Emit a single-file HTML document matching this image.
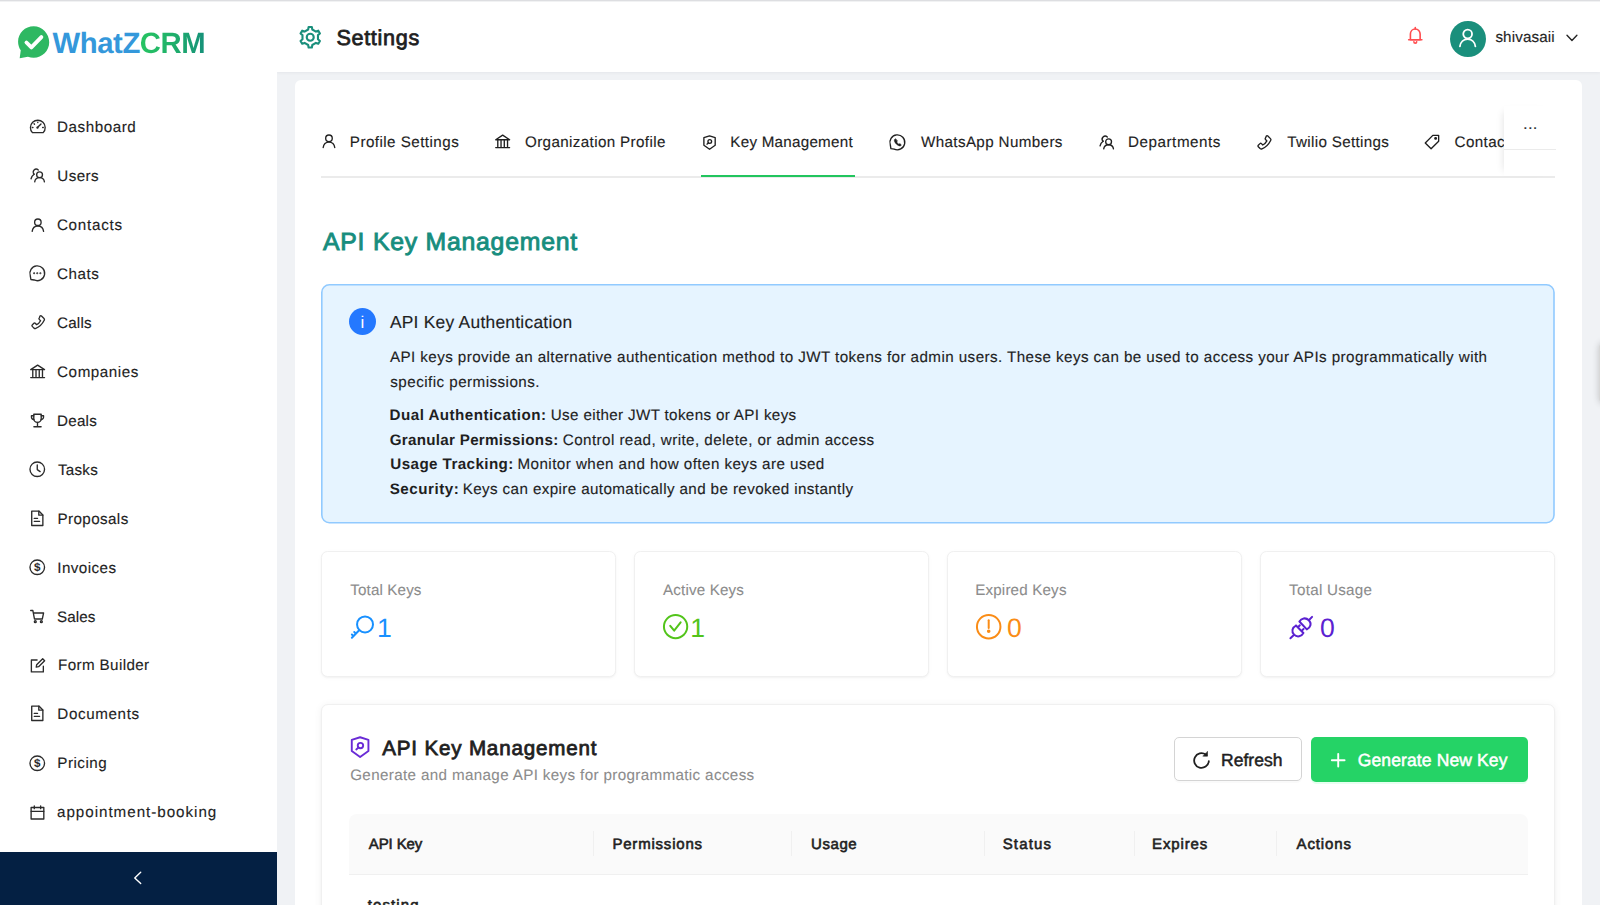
<!DOCTYPE html>
<html lang="en">
<head>
<meta charset="utf-8">
<title>Settings - WhatZCRM</title>
<style>
*{box-sizing:border-box;margin:0;padding:0}
html,body{width:1600px;height:905px;overflow:hidden}
body{font-family:"Liberation Sans",sans-serif;text-rendering:geometricPrecision;background:#f0f2f5;color:#1f1f1f;position:relative}
.abs{position:absolute}
svg{display:block;overflow:visible}
.ico{fill:none;stroke:currentColor;stroke-linecap:round;stroke-linejoin:round}
.ico *{vector-effect:non-scaling-stroke}
.t{white-space:nowrap;line-height:1.2}
.grad{background:linear-gradient(90deg,#27c462 0%,#1fb06a 50%,#16917a 100%);-webkit-background-clip:text;background-clip:text;color:transparent;-webkit-text-fill-color:transparent}
#topline{left:0;top:0;width:1600px;height:2px;background:linear-gradient(#dddee1 0,#dddee1 1px,#f1f2f3 1px,#f1f2f3 2px);z-index:50}
#edge{left:1598.5px;top:342px;width:12px;height:62px;border-radius:6px;background:#d8d8d8;box-shadow:0 0 7px rgba(0,0,0,.2);z-index:3}
#side{left:0;top:0;width:277px;height:905px;background:#fff;z-index:5}
#logo{left:16.8px;top:24.9px;height:36.5px;width:36.5px;z-index:6}
#collapse{left:0;top:852px;width:277px;height:53px;background:#042043;z-index:6}
#head{left:277px;top:0;width:1323px;height:72px;background:#fff;box-shadow:0 1px 3px rgba(0,21,41,.05);z-index:4}
#avatar{left:1450.4px;top:21px;width:35.8px;height:35.8px;border-radius:50%;background:#1a8f7c;z-index:7}
#main{left:295px;top:80.3px;width:1287px;height:840px;background:#fff;border-radius:6px;z-index:1}
#tabline{left:321px;top:176px;width:1234px;height:1.5px;background:#ebebeb;z-index:2}
#tabactive{left:701px;top:174.6px;width:153.8px;height:2.2px;background:#22c55e;z-index:3}
#more{left:1504px;top:106px;width:51px;height:70px;background:#fff;z-index:3;box-shadow:-6px 0 8px -6px rgba(0,0,0,.12)}
#alert{left:321.2px;top:284.3px;width:1233.8px;height:239.5px;z-index:2}
.stat{top:550.5px;width:295px;height:126px;background:#fff;border:1px solid #f0f0f0;border-radius:6.5px;z-index:2;box-shadow:0 1px 2px rgba(0,0,0,.04),0 1px 6px -1px rgba(0,0,0,.03)}
#card{left:321px;top:704px;width:1234px;height:230px;background:#fff;border:1px solid #f0f0f0;border-radius:7px;z-index:2;box-shadow:0 1px 2px rgba(0,0,0,.03),0 1px 9px rgba(0,0,0,.055)}
#btn1{left:1174.3px;top:737.2px;width:127.7px;height:44.3px;border:1px solid #d4d4d4;border-radius:5px;background:#fff;z-index:3;box-shadow:0 2px 0 rgba(0,0,0,.02)}
#btn2{left:1310.8px;top:737px;width:217.2px;height:44.5px;border-radius:5px;background:#25d366;z-index:3;box-shadow:0 2px 0 rgba(5,255,105,.1)}
#thead{left:348.8px;top:813.8px;width:1179.2px;height:61px;background:#fafafa;border-bottom:1px solid #f0f0f0;border-radius:8px 8px 0 0;z-index:3}
.sep{top:17.5px;width:1px;height:25px;background:#f0f0f0}
</style>
</head>
<body>
<div id="topline" class="abs"></div>
<div id="edge" class="abs"></div>
<div id="side" class="abs"></div>
<svg id="logo" class="abs" viewBox="0 0 34 34">
  <path d="M15.5 1.2C7.500 1.2 1 7.600 1 15.500c0 3 .900 5.700 2.500 8L2.500 30.900l7.700-1.300c1.700.600 3.500.900 5.300.900 8 0 14.500-6.400 14.500-14.400S23.500 1.200 15.500 1.200z" fill="#2eb862"/>
  <path d="M8.800 16.300l4.600 4.600 9.300-9.600" fill="none" stroke="#fff" stroke-width="3.600" stroke-linecap="round" stroke-linejoin="round"/>
</svg>
<div id="collapse" class="abs"></div>
<div id="head" class="abs"></div>
<div id="avatar" class="abs"></div>
<div id="main" class="abs"></div>
<div id="tabline" class="abs"></div>
<div id="tabactive" class="abs"></div>
<div id="more" class="abs"><div class="abs" style="left:0;top:43px;width:52px;height:1px;background:#ebebeb"></div></div>
<svg id="alert" class="abs" viewBox="0 0 1233.8 239.5"><rect x=".8" y=".8" width="1232.2" height="237.9" rx="7.6" fill="#e6f4ff" stroke="#91caff" stroke-width="1.6"/></svg>
<div class="abs stat" style="left:321px"></div>
<div class="abs stat" style="left:634px"></div>
<div class="abs stat" style="left:947px"></div>
<div class="abs stat" style="left:1260px"></div>
<div id="card" class="abs"></div>
<div id="btn1" class="abs"></div>
<div id="btn2" class="abs"></div>
<div id="thead" class="abs">
  <div class="abs sep" style="left:244px"></div><div class="abs sep" style="left:442.500px"></div><div class="abs sep" style="left:635.500px"></div><div class="abs sep" style="left:785px"></div><div class="abs sep" style="left:927.500px"></div>
</div>
<div id="t0" class="abs t" style="left:52.50px;top:26.00px;font-size:29.3px;font-weight:700;color:#3498db;z-index:6;letter-spacing:-0.429px;"><span style="color:#3498db">WhatZ</span><span class="grad">CRM</span></div>
<div id="t1" class="abs t" style="left:57.10px;top:119.22px;font-size:15.2px;font-weight:400;color:#1f1f1f;z-index:6;letter-spacing:0.538px;-webkit-text-stroke:0.15px currentColor;">Dashboard</div>
<div id="t2" class="abs t" style="left:57.30px;top:168.15px;font-size:15.2px;font-weight:400;color:#1f1f1f;z-index:6;letter-spacing:0.425px;-webkit-text-stroke:0.15px currentColor;">Users</div>
<div id="t3" class="abs t" style="left:56.90px;top:217.08px;font-size:15.2px;font-weight:400;color:#1f1f1f;z-index:6;letter-spacing:0.757px;-webkit-text-stroke:0.15px currentColor;">Contacts</div>
<div id="t4" class="abs t" style="left:57.10px;top:265.99px;font-size:15.2px;font-weight:400;color:#1f1f1f;z-index:6;letter-spacing:0.500px;-webkit-text-stroke:0.15px currentColor;">Chats</div>
<div id="t5" class="abs t" style="left:57.00px;top:314.92px;font-size:15.2px;font-weight:400;color:#1f1f1f;z-index:6;letter-spacing:0.225px;-webkit-text-stroke:0.15px currentColor;">Calls</div>
<div id="t6" class="abs t" style="left:57.10px;top:363.85px;font-size:15.2px;font-weight:400;color:#1f1f1f;z-index:6;letter-spacing:0.562px;-webkit-text-stroke:0.15px currentColor;">Companies</div>
<div id="t7" class="abs t" style="left:57.10px;top:412.78px;font-size:15.2px;font-weight:400;color:#1f1f1f;z-index:6;letter-spacing:0.200px;-webkit-text-stroke:0.15px currentColor;">Deals</div>
<div id="t8" class="abs t" style="left:58.00px;top:461.72px;font-size:15.2px;font-weight:400;color:#1f1f1f;z-index:6;letter-spacing:0.225px;-webkit-text-stroke:0.15px currentColor;">Tasks</div>
<div id="t9" class="abs t" style="left:57.50px;top:510.65px;font-size:15.2px;font-weight:400;color:#1f1f1f;z-index:6;letter-spacing:0.400px;-webkit-text-stroke:0.15px currentColor;">Proposals</div>
<div id="t10" class="abs t" style="left:57.30px;top:559.58px;font-size:15.2px;font-weight:400;color:#1f1f1f;z-index:6;letter-spacing:0.429px;-webkit-text-stroke:0.15px currentColor;">Invoices</div>
<div id="t11" class="abs t" style="left:57.00px;top:608.51px;font-size:15.2px;font-weight:400;color:#1f1f1f;z-index:6;letter-spacing:0.100px;-webkit-text-stroke:0.15px currentColor;">Sales</div>
<div id="t12" class="abs t" style="left:58.00px;top:657.44px;font-size:15.2px;font-weight:400;color:#1f1f1f;z-index:6;letter-spacing:0.382px;-webkit-text-stroke:0.15px currentColor;">Form Builder</div>
<div id="t13" class="abs t" style="left:57.30px;top:706.37px;font-size:15.2px;font-weight:400;color:#1f1f1f;z-index:6;letter-spacing:0.625px;-webkit-text-stroke:0.15px currentColor;">Documents</div>
<div id="t14" class="abs t" style="left:57.30px;top:755.30px;font-size:15.2px;font-weight:400;color:#1f1f1f;z-index:6;letter-spacing:0.500px;-webkit-text-stroke:0.15px currentColor;">Pricing</div>
<div id="t15" class="abs t" style="left:57.00px;top:804.23px;font-size:15.2px;font-weight:400;color:#1f1f1f;z-index:6;letter-spacing:0.967px;-webkit-text-stroke:0.15px currentColor;">appointment-booking</div>
<div id="t16" class="abs t" style="left:336.40px;top:25.11px;font-size:21.6px;font-weight:400;color:#1f1f1f;z-index:7;letter-spacing:0.686px;-webkit-text-stroke:0.8px currentColor;">Settings</div>
<div id="t17" class="abs t" style="left:1495.40px;top:29.41px;font-size:15.2px;font-weight:400;color:#262626;z-index:7;letter-spacing:0.138px;-webkit-text-stroke:0.15px currentColor;">shivasaii</div>
<div id="t18" class="abs t" style="left:349.80px;top:133.81px;font-size:15.2px;font-weight:400;color:#1f1f1f;z-index:2;letter-spacing:0.453px;-webkit-text-stroke:0.15px currentColor;">Profile Settings</div>
<div id="t19" class="abs t" style="left:525.00px;top:133.81px;font-size:15.2px;font-weight:400;color:#1f1f1f;z-index:2;letter-spacing:0.368px;-webkit-text-stroke:0.15px currentColor;">Organization Profile</div>
<div id="t20" class="abs t" style="left:730.30px;top:133.81px;font-size:15.2px;font-weight:400;color:#1f1f1f;z-index:2;letter-spacing:0.254px;-webkit-text-stroke:0.15px currentColor;">Key Management</div>
<div id="t21" class="abs t" style="left:921.00px;top:133.81px;font-size:15.2px;font-weight:400;color:#1f1f1f;z-index:2;letter-spacing:0.367px;-webkit-text-stroke:0.15px currentColor;">WhatsApp Numbers</div>
<div id="t22" class="abs t" style="left:1128.00px;top:133.81px;font-size:15.2px;font-weight:400;color:#1f1f1f;z-index:2;letter-spacing:0.550px;-webkit-text-stroke:0.15px currentColor;">Departments</div>
<div id="t23" class="abs t" style="left:1287.30px;top:133.81px;font-size:15.2px;font-weight:400;color:#1f1f1f;z-index:2;letter-spacing:0.325px;-webkit-text-stroke:0.15px currentColor;">Twilio Settings</div>
<div id="t24" class="abs t" style="left:1454.50px;top:133.81px;font-size:15.2px;font-weight:400;color:#1f1f1f;z-index:2;letter-spacing:0.409px;-webkit-text-stroke:0.15px currentColor;">Contact Tags</div>
<div id="t25" class="abs t" style="left:323.00px;top:228.10px;font-size:24.8px;font-weight:400;color:#178d7e;z-index:2;letter-spacing:0.759px;-webkit-text-stroke:0.9px currentColor;">API Key Management</div>
<div id="t26" class="abs t" style="left:389.90px;top:312.40px;font-size:17.4px;font-weight:400;color:#1f1f1f;z-index:3;letter-spacing:0.252px;-webkit-text-stroke:0.15px currentColor;">API Key Authentication</div>
<div id="t27" class="abs t" style="left:389.90px;top:349.10px;font-size:15.2px;font-weight:400;color:#1f1f1f;z-index:3;letter-spacing:0.424px;-webkit-text-stroke:0.15px currentColor;">API keys provide an alternative authentication method to JWT tokens for admin users. These keys can be used to access your APIs programmatically with</div>
<div id="t28" class="abs t" style="left:390.30px;top:373.72px;font-size:15.2px;font-weight:400;color:#1f1f1f;z-index:3;letter-spacing:0.455px;-webkit-text-stroke:0.15px currentColor;">specific permissions.</div>
<div id="t29" class="abs t" style="left:389.60px;top:407.31px;font-size:15.2px;font-weight:700;color:#1f1f1f;z-index:3;letter-spacing:0.447px;">Dual Authentication:</div>
<div id="t30" class="abs t" style="left:550.80px;top:407.31px;font-size:15.2px;font-weight:400;color:#1f1f1f;z-index:3;letter-spacing:0.344px;-webkit-text-stroke:0.15px currentColor;">Use either JWT tokens or API keys</div>
<div id="t31" class="abs t" style="left:389.70px;top:431.72px;font-size:15.2px;font-weight:700;color:#1f1f1f;z-index:3;letter-spacing:0.280px;">Granular Permissions:</div>
<div id="t32" class="abs t" style="left:562.80px;top:431.72px;font-size:15.2px;font-weight:400;color:#1f1f1f;z-index:3;letter-spacing:0.426px;-webkit-text-stroke:0.15px currentColor;">Control read, write, delete, or admin access</div>
<div id="t33" class="abs t" style="left:390.30px;top:456.10px;font-size:15.2px;font-weight:700;color:#1f1f1f;z-index:3;letter-spacing:0.407px;">Usage Tracking:</div>
<div id="t34" class="abs t" style="left:517.50px;top:456.10px;font-size:15.2px;font-weight:400;color:#1f1f1f;z-index:3;letter-spacing:0.441px;-webkit-text-stroke:0.15px currentColor;">Monitor when and how often keys are used</div>
<div id="t35" class="abs t" style="left:389.70px;top:480.51px;font-size:15.2px;font-weight:700;color:#1f1f1f;z-index:3;letter-spacing:0.513px;">Security:</div>
<div id="t36" class="abs t" style="left:462.70px;top:480.51px;font-size:15.2px;font-weight:400;color:#1f1f1f;z-index:3;letter-spacing:0.389px;-webkit-text-stroke:0.15px currentColor;">Keys can expire automatically and be revoked instantly</div>
<div id="t37" class="abs t" style="left:360.60px;top:313.01px;font-size:17px;font-weight:400;color:#ffffff;z-index:4;letter-spacing:0.000px;">i</div>
<div id="t38" class="abs t" style="left:350.30px;top:582.41px;font-size:15.2px;font-weight:400;color:#8c8c8c;z-index:3;letter-spacing:0.122px;-webkit-text-stroke:0.1px currentColor;">Total Keys</div>
<div id="t39" class="abs t" style="left:663.00px;top:582.41px;font-size:15.2px;font-weight:400;color:#8c8c8c;z-index:3;letter-spacing:0.160px;-webkit-text-stroke:0.1px currentColor;">Active Keys</div>
<div id="t40" class="abs t" style="left:975.20px;top:582.41px;font-size:15.2px;font-weight:400;color:#8c8c8c;z-index:3;letter-spacing:0.164px;-webkit-text-stroke:0.1px currentColor;">Expired Keys</div>
<div id="t41" class="abs t" style="left:1289.10px;top:582.41px;font-size:15.2px;font-weight:400;color:#8c8c8c;z-index:3;letter-spacing:0.270px;-webkit-text-stroke:0.1px currentColor;">Total Usage</div>
<div id="t42" class="abs t" style="left:377.10px;top:613.40px;font-size:26.6px;font-weight:400;color:#1890ff;z-index:3;letter-spacing:0.000px;">1</div>
<div id="t43" class="abs t" style="left:690.30px;top:613.40px;font-size:26.6px;font-weight:400;color:#52c41a;z-index:3;letter-spacing:0.000px;">1</div>
<div id="t44" class="abs t" style="left:1006.90px;top:613.40px;font-size:26.6px;font-weight:400;color:#fa8c16;z-index:3;letter-spacing:0.000px;">0</div>
<div id="t45" class="abs t" style="left:1319.90px;top:613.40px;font-size:26.6px;font-weight:400;color:#5b21d1;z-index:3;letter-spacing:0.000px;">0</div>
<div id="t46" class="abs t" style="left:382.20px;top:736.72px;font-size:20.6px;font-weight:400;color:#1f1f1f;z-index:3;letter-spacing:0.821px;-webkit-text-stroke:0.8px currentColor;">API Key Management</div>
<div id="t47" class="abs t" style="left:350.20px;top:767.01px;font-size:15.2px;font-weight:400;color:#8c8c8c;z-index:3;letter-spacing:0.357px;-webkit-text-stroke:0.1px currentColor;">Generate and manage API keys for programmatic access</div>
<div id="t48" class="abs t" style="left:1221.00px;top:750.10px;font-size:17.5px;font-weight:400;color:#1f1f1f;z-index:4;letter-spacing:0.033px;-webkit-text-stroke:0.5px currentColor;">Refresh</div>
<div id="t49" class="abs t" style="left:1357.70px;top:750.10px;font-size:17.5px;font-weight:400;color:#ffffff;z-index:4;letter-spacing:0.127px;-webkit-text-stroke:0.5px currentColor;">Generate New Key</div>
<div id="t50" class="abs t" style="left:368.80px;top:835.71px;font-size:15px;font-weight:400;color:#1f1f1f;z-index:4;letter-spacing:-0.117px;-webkit-text-stroke:0.6px currentColor;">API Key</div>
<div id="t51" class="abs t" style="left:612.40px;top:835.71px;font-size:15px;font-weight:400;color:#1f1f1f;z-index:4;letter-spacing:0.800px;-webkit-text-stroke:0.6px currentColor;">Permissions</div>
<div id="t52" class="abs t" style="left:811.10px;top:835.71px;font-size:15px;font-weight:400;color:#1f1f1f;z-index:4;letter-spacing:0.550px;-webkit-text-stroke:0.6px currentColor;">Usage</div>
<div id="t53" class="abs t" style="left:1002.70px;top:835.71px;font-size:15px;font-weight:400;color:#1f1f1f;z-index:4;letter-spacing:1.160px;-webkit-text-stroke:0.6px currentColor;">Status</div>
<div id="t54" class="abs t" style="left:1152.00px;top:835.71px;font-size:15px;font-weight:400;color:#1f1f1f;z-index:4;letter-spacing:0.883px;-webkit-text-stroke:0.6px currentColor;">Expires</div>
<div id="t55" class="abs t" style="left:1296.60px;top:835.71px;font-size:15px;font-weight:400;color:#1f1f1f;z-index:4;letter-spacing:0.850px;-webkit-text-stroke:0.6px currentColor;">Actions</div>
<div id="t56" class="abs t" style="left:367.85px;top:897.00px;font-size:15px;font-weight:400;color:#1f1f1f;z-index:4;letter-spacing:1.075px;-webkit-text-stroke:0.6px currentColor;">testing</div>
<div id="t57" class="abs t" style="left:1523.30px;top:115.90px;font-size:15px;font-weight:400;color:#262626;z-index:4;letter-spacing:0.700px;-webkit-text-stroke:0.2px currentColor;">...</div>
<svg id="i0" class="abs ico" style="left:28.90px;top:118.20px;width:17.61px;height:17.61px;color:#2b2b2b;z-index:6;stroke-width:1.35px;" viewBox="0 0 16 16"><path d="M3.1 13.3A6.7 6.7 0 1 1 12.9 13.3Z"/><path d="M7.700 8.700L10.900 5.400"/><circle cx="7.700" cy="8.700" r=".45" fill="currentColor"/><path d="M8 3.700v.500M4.600 5.300l.400.400M3 8.600h.600M12.400 8.600h.600"/></svg>
<svg id="i1" class="abs ico" style="left:29.07px;top:167.16px;width:17.26px;height:17.26px;color:#2b2b2b;z-index:6;stroke-width:1.35px;" viewBox="0 0 16 16"><circle cx="9.800" cy="7.200" r="2.700"/><path d="M5.300 13.800c.300-2.600 2.100-3.900 4.500-3.900s4.200 1.300 4.500 3.900"/><path d="M8.600 2.800A2.750 2.750 0 1 0 4.700 6.700"/><path d="M4.700 6.700C3.300 7.700 2.300 9.200 1.900 10.900"/></svg>
<svg id="i2" class="abs ico" style="left:29.82px;top:216.70px;width:15.75px;height:15.75px;color:#2b2b2b;z-index:6;stroke-width:1.35px;" viewBox="0 0 16 16"><circle cx="8" cy="5.300" r="3.300"/><path d="M2.200 14.600c.4-3.400 2.800-5.500 5.800-5.500s5.400 2.100 5.800 5.500"/></svg>
<svg id="i3" class="abs ico" style="left:28.44px;top:264.11px;width:18.53px;height:18.53px;color:#2b2b2b;z-index:6;stroke-width:1.35px;" viewBox="0 0 16 16"><path d="M1.980 10.190A6.400 6.400 0 1 1 5.300 13.800L2.500 13.400Z"/><circle cx="5.300" cy="8" r=".3" fill="currentColor"/><circle cx="8" cy="8" r=".3" fill="currentColor"/><circle cx="10.700" cy="8" r=".3" fill="currentColor"/></svg>
<svg id="i4" class="abs ico" style="left:29.57px;top:314.03px;width:16.25px;height:16.25px;color:#2b2b2b;z-index:6;stroke-width:1.35px;" viewBox="0 0 16 16"><path d="M11.300 1.900l2.500 2.500c.5.500.6 1.100.2 1.800C12 10.200 9.700 12.600 5.700 14.200c-.7.300-1.300.100-1.800-.300L2.200 12.200c-.4-.4-.4-1 0-1.400l1.600-1.600c.4-.4 1-.4 1.400 0l1.300 1.300c1.700-.8 3-2.200 3.900-3.900L9.100 5.300c-.4-.4-.4-1 0-1.400l.8-2c.4-.4 1-.4 1.400 0z"/></svg>
<svg id="i5" class="abs ico" style="left:29.07px;top:363.32px;width:17.26px;height:17.26px;color:#2b2b2b;z-index:6;stroke-width:1.35px;" viewBox="0 0 16 16"><path d="M1.600 6.200L8 2l6.400 4.200z"/><path d="M3.500 6.800v5.900M6.500 6.800v5.900M9.500 6.800v5.900M12.500 6.800v5.900M1.600 13.500h12.800"/></svg>
<svg id="i6" class="abs ico" style="left:29.19px;top:412.23px;width:17.01px;height:17.01px;color:#2b2b2b;z-index:6;stroke-width:1.35px;" viewBox="0 0 16 16"><path d="M4.500 2.100h7v4.200a3.500 3.500 0 0 1-7 0V2.100z"/><path d="M4.500 3.500H2.300v1.300a2.300 2.300 0 0 0 2.300 2.300M11.500 3.500h2.200v1.300a2.300 2.300 0 0 1-2.300 2.300M8 9.900v3.700M4.600 13.900h6.800"/></svg>
<svg id="i7" class="abs ico" style="left:28.44px;top:460.27px;width:18.53px;height:18.53px;color:#2b2b2b;z-index:6;stroke-width:1.35px;" viewBox="0 0 16 16"><circle cx="8" cy="8" r="6.300"/><path d="M8 4.300v4l2.500 1.700"/></svg>
<svg id="i8" class="abs ico" style="left:28.40px;top:509.02px;width:18.59px;height:18.59px;color:#2b2b2b;z-index:6;stroke-width:1.35px;" viewBox="0 0 16 16"><path d="M3.200 1.800h6.200l3.400 3.400v9H3.200V1.800z"/><path d="M9.300 1.900v3.400h3.400M5.400 8.100h2.800M5.400 10.600h4.600"/></svg>
<svg id="i9" class="abs ico" style="left:28.44px;top:557.85px;width:18.53px;height:18.53px;color:#2b2b2b;z-index:6;stroke-width:1.35px;" viewBox="0 0 16 16"><circle cx="8" cy="8" r="6.300"/><text x="8" y="11.300" text-anchor="middle" font-size="10" font-weight="700" font-family="Liberation Sans, sans-serif" fill="currentColor" stroke="none">$</text></svg>
<svg id="i10" class="abs ico" style="left:29.32px;top:607.52px;width:16.76px;height:16.76px;color:#2b2b2b;z-index:6;stroke-width:1.35px;" viewBox="0 0 16 16"><path d="M1.600 2.400h2.100l1.500 8.100h7.500l1.200-5.700H4.200"/><circle cx="6" cy="13.100" r=".9"/><circle cx="11.800" cy="13.100" r=".9"/></svg>
<svg id="i11" class="abs ico" style="left:29.07px;top:657.06px;width:17.26px;height:17.26px;color:#2b2b2b;z-index:6;stroke-width:1.35px;" viewBox="0 0 16 16"><path d="M13.300 8.600v5.200H2.200V2.800h5.300"/><path d="M6.700 9.400l.4-2.200 5.600-5.600 1.800 1.800-5.600 5.600-2.200.4z"/></svg>
<svg id="i12" class="abs ico" style="left:28.40px;top:704.18px;width:18.59px;height:18.59px;color:#2b2b2b;z-index:6;stroke-width:1.35px;" viewBox="0 0 16 16"><path d="M3.200 1.800h6.200l3.400 3.400v9H3.200V1.800z"/><path d="M9.300 1.900v3.400h3.400M5.400 8.100h2.800M5.400 10.600h4.600"/></svg>
<svg id="i13" class="abs ico" style="left:28.44px;top:754.01px;width:18.53px;height:18.53px;color:#2b2b2b;z-index:6;stroke-width:1.35px;" viewBox="0 0 16 16"><circle cx="8" cy="8" r="6.300"/><text x="8" y="11.300" text-anchor="middle" font-size="10" font-weight="700" font-family="Liberation Sans, sans-serif" fill="currentColor" stroke="none">$</text></svg>
<svg id="i14" class="abs ico" style="left:29.23px;top:803.59px;width:16.95px;height:16.95px;color:#2b2b2b;z-index:6;stroke-width:1.35px;" viewBox="0 0 16 16"><path d="M2 3.300h12v10.900H2z"/><path d="M2 6.900h12M5 1.800v2.600M11 1.800v2.600"/></svg>
<svg id="i15" class="abs ico" style="left:298.77px;top:26.07px;width:22.47px;height:22.47px;color:#1a8f7c;z-index:7;stroke-width:2.1px;" viewBox="0 0 16 16"><path d="M6.52 2.49 L6.84 0.69 L9.16 0.69 L9.48 2.49 L12.03 3.97 L13.75 3.34 L14.91 5.35 L13.51 6.52 L13.51 9.48 L14.91 10.65 L13.75 12.66 L12.03 12.03 L9.48 13.51 L9.16 15.31 L6.84 15.31 L6.52 13.51 L3.97 12.03 L2.25 12.66 L1.09 10.65 L2.49 9.48 L2.49 6.52 L1.09 5.35 L2.25 3.34 L3.97 3.97Z"/><circle cx="8" cy="8" r="2.500"/></svg>
<svg id="i16" class="abs ico" style="left:1405.72px;top:26.42px;width:18.55px;height:18.55px;color:#ff4d4f;z-index:7;stroke-width:1.6px;" viewBox="0 0 16 16"><path d="M8 2.600c-2.500 0-4.200 1.900-4.200 4.400v4.800h8.400V7c0-2.500-1.700-4.400-4.200-4.400z"/><path d="M2.300 11.900h11.400M8 1.400v1.200M6.800 13.600a1.200 1.200 0 0 0 2.400 0"/></svg>
<svg id="i17" class="abs ico" style="left:1457.25px;top:27.15px;width:21.30px;height:21.30px;color:#ffffff;z-index:8;stroke-width:1.8px;" viewBox="0 0 16 16"><circle cx="8" cy="5.300" r="3.300"/><path d="M2.200 14.600c.4-3.400 2.800-5.500 5.800-5.500s5.400 2.100 5.800 5.500"/></svg>
<svg id="i18" class="abs ico" style="left:1564.64px;top:30.74px;width:13.92px;height:13.92px;color:#262626;z-index:7;stroke-width:1.4px;" viewBox="0 0 16 16"><path d="M2.300 5l5.700 6 5.700-6"/></svg>
<svg id="i19" class="abs ico" style="left:130.07px;top:870.07px;width:15.87px;height:15.87px;color:#ffffff;z-index:7;stroke-width:1.4px;" viewBox="0 0 16 16"><path d="M10.800 2.300L4.800 8l6 5.700"/></svg>
<svg id="i20" class="abs ico" style="left:320.78px;top:133.33px;width:15.95px;height:15.95px;color:#1f1f1f;z-index:2;stroke-width:1.35px;" viewBox="0 0 16 16"><circle cx="8" cy="5.300" r="3.300"/><path d="M2.200 14.600c.4-3.400 2.800-5.500 5.800-5.500s5.400 2.100 5.800 5.500"/></svg>
<svg id="i21" class="abs ico" style="left:493.79px;top:133.04px;width:17.33px;height:17.33px;color:#1f1f1f;z-index:2;stroke-width:1.35px;" viewBox="0 0 16 16"><path d="M1.600 6.200L8 2l6.400 4.200z"/><path d="M3.500 6.800v5.900M6.500 6.800v5.900M9.500 6.800v5.900M12.500 6.800v5.900M1.600 13.500h12.800"/></svg>
<svg id="i22" class="abs ico" style="left:701.66px;top:134.71px;width:15.09px;height:15.09px;color:#1f1f1f;z-index:2;stroke-width:1.35px;" viewBox="0 0 16 16"><path d="M8 .900L14 2.850V10.800L8 15.100L2 10.800V2.850Z"/><circle cx="8.250" cy="6.900" r="1.950"/><path d="M6.800 8.350L5.250 9.700"/></svg>
<svg id="i23" class="abs ico" style="left:887.92px;top:132.97px;width:18.66px;height:18.66px;color:#1f1f1f;z-index:2;stroke-width:1.35px;" viewBox="0 0 16 16"><path d="M1.980 10.190A6.400 6.400 0 1 1 5.300 13.800L2.500 13.400Z"/><path d="M6.300 5c-.900.400-1.100 1.300-.700 2.200.700 1.700 2 3 3.700 3.700.900.400 1.800.200 2.200-.700l-1.300-1.100-.900.500c-.800-.400-1.400-1-1.800-1.800l.500-.900z" fill="currentColor" stroke-width="0.5"/></svg>
<svg id="i24" class="abs ico" style="left:1098.23px;top:133.65px;width:17.30px;height:17.30px;color:#1f1f1f;z-index:2;stroke-width:1.35px;" viewBox="0 0 16 16"><circle cx="9.800" cy="7.200" r="2.700"/><path d="M5.300 13.800c.300-2.600 2.100-3.900 4.500-3.900s4.200 1.300 4.500 3.900"/><path d="M8.600 2.800A2.750 2.750 0 1 0 4.700 6.700"/><path d="M4.700 6.700C3.300 7.700 2.300 9.200 1.900 10.900"/></svg>
<svg id="i25" class="abs ico" style="left:1255.62px;top:133.92px;width:16.76px;height:16.76px;color:#1f1f1f;z-index:2;stroke-width:1.35px;" viewBox="0 0 16 16"><path d="M11.300 1.900l2.500 2.500c.5.500.6 1.100.2 1.800C12 10.200 9.700 12.600 5.700 14.200c-.7.300-1.300.100-1.800-.300L2.200 12.200c-.4-.4-.4-1 0-1.400l1.600-1.600c.4-.4 1-.4 1.400 0l1.300 1.300c1.700-.8 3-2.200 3.900-3.900L9.100 5.300c-.4-.4-.4-1 0-1.400l.8-2c.4-.4 1-.4 1.400 0z"/></svg>
<svg id="i26" class="abs ico" style="left:1423.49px;top:133.29px;width:18.02px;height:18.02px;color:#1f1f1f;z-index:2;stroke-width:1.35px;" viewBox="0 0 16 16"><path d="M8.700 2.100h5.200v5.200l-6.700 6.700-5.200-5.200 6.700-6.700z"/><circle cx="11.200" cy="4.800" r=".7" fill="currentColor"/></svg>
<svg id="i27" class="abs ico" style="left:349.00px;top:307.90px;width:27.00px;height:27.00px;color:#2478ff;z-index:3;stroke-width:0px;" viewBox="0 0 16 16"><circle cx="8" cy="8" r="8" fill="currentColor" stroke="none"/></svg>
<svg id="i28" class="abs ico" style="left:351.29px;top:615.49px;width:23.63px;height:23.63px;color:#1890ff;z-index:3;stroke-width:2px;" viewBox="0 0 16 16"><circle cx="9.500" cy="6.400" r="5.400"/><path d="M5.700 10.200L.6 15.400M3.300 12.600l-1.100-1.100M1.700 14.300l-1.100-1.100"/></svg>
<svg id="i29" class="abs ico" style="left:662.60px;top:614.20px;width:25.20px;height:25.20px;color:#52c41a;z-index:3;stroke-width:2px;" viewBox="0 0 16 16"><circle cx="8" cy="8" r="7.400"/><path d="M4.600 7.500l2.500 3.100 4.100-5.300"/></svg>
<svg id="i30" class="abs ico" style="left:975.80px;top:614.10px;width:25.40px;height:25.40px;color:#fa8c16;z-index:3;stroke-width:2px;" viewBox="0 0 16 16"><circle cx="8" cy="8" r="7.400"/><path d="M8 3.950v4.950"/><circle cx="8" cy="10.900" r=".5" fill="currentColor"/></svg>
<svg id="i31" class="abs ico" style="left:1290.10px;top:615.80px;width:22.80px;height:22.80px;color:#5b21d1;z-index:3;stroke-width:2px;" viewBox="0 0 16 16"><path d="M6.600 3.900L11.800 9.400M6.600 3.900C8 1.500 11 .8 13.200 3C15.400 5.200 14.500 8 11.800 9.400M13.200 3L15.500.6"/><path d="M4.200 6.700L9.400 11.900M4.200 6.700C1.500 8 .8 11 2.900 13.100C5 15.200 8 14.500 9.400 11.900M2.900 13.100L.3 15.600M5.900 7.500l1-1M8.500 10.100l1-1"/></svg>
<svg id="i32" class="abs ico" style="left:349.40px;top:735.90px;width:22.21px;height:22.21px;color:#6a2bd6;z-index:3;stroke-width:1.9px;" viewBox="0 0 16 16"><path d="M8 .900L14 2.850V10.800L8 15.100L2 10.800V2.850Z"/><circle cx="8.250" cy="6.900" r="1.950"/><path d="M6.800 8.350L5.250 9.700"/></svg>
<svg id="i33" class="abs ico" style="left:1190.92px;top:750.22px;width:20.96px;height:20.96px;color:#1f1f1f;z-index:4;stroke-width:1.8px;" viewBox="0 0 16 16"><path d="M13.600 8.600A5.600 5.600 0 1 1 11.300 3.500"/><path d="M12.600 1.300v3.400H9.300z" fill="currentColor" stroke-width="0.6"/></svg>
<svg id="i34" class="abs ico" style="left:1329.87px;top:751.57px;width:16.45px;height:16.45px;color:#ffffff;z-index:4;stroke-width:1.9px;" viewBox="0 0 16 16"><path d="M8 1.800v12.400M1.800 8h12.400"/></svg>
</body>
</html>
